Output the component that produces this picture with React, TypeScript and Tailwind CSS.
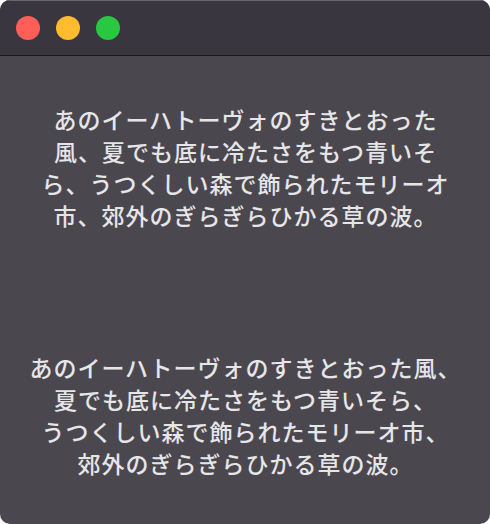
import React from "react";

const lines1 = [
  "あのイーハトーヴォのすきとおった",
  "風、夏でも底に冷たさをもつ青いそ",
  "ら、うつくしい森で飾られたモリーオ",
  "市、郊外のぎらぎらひかる草の波。",
];
const lines2 = [
  "あのイーハトーヴォのすきとおった風、",
  "夏でも底に冷たさをもつ青いそら、",
  "うつくしい森で飾られたモリーオ市、",
  "郊外のぎらぎらひかる草の波。",
];

function Block({ lines }: { lines: string[] }) {
  return (
    <p className="pl-[1px] text-center text-[23px] font-medium leading-8 tracking-[1px] text-[#e6e5e8] [font-family:'Noto_Sans_CJK_JP','Noto_Sans',sans-serif]">
      {lines.map((l, i) => (
        <React.Fragment key={i}>
          {l}
          {i < lines.length - 1 && <br />}
        </React.Fragment>
      ))}
    </p>
  );
}

export default function App() {
  return (
    <div className="h-[524px] w-[490px] bg-white">
      <div className="flex h-full flex-col overflow-hidden rounded-[10px] bg-[#4a484e]">
        <div className="flex h-[56px] shrink-0 items-center gap-4 border-b border-[#19181b] bg-[#3a3640] pl-4 shadow-[inset_0_1px_0_#6a6670]">
          <span className="size-6 rounded-full bg-[#ff5f57]" />
          <span className="size-6 rounded-full bg-[#febc2e]" />
          <span className="size-6 rounded-full bg-[#28c840]" />
        </div>
        <div className="flex flex-col pt-[47px]">
          <Block lines={lines1} />
          <div className="h-[120px]" />
          <Block lines={lines2} />
        </div>
      </div>
    </div>
  );
}
